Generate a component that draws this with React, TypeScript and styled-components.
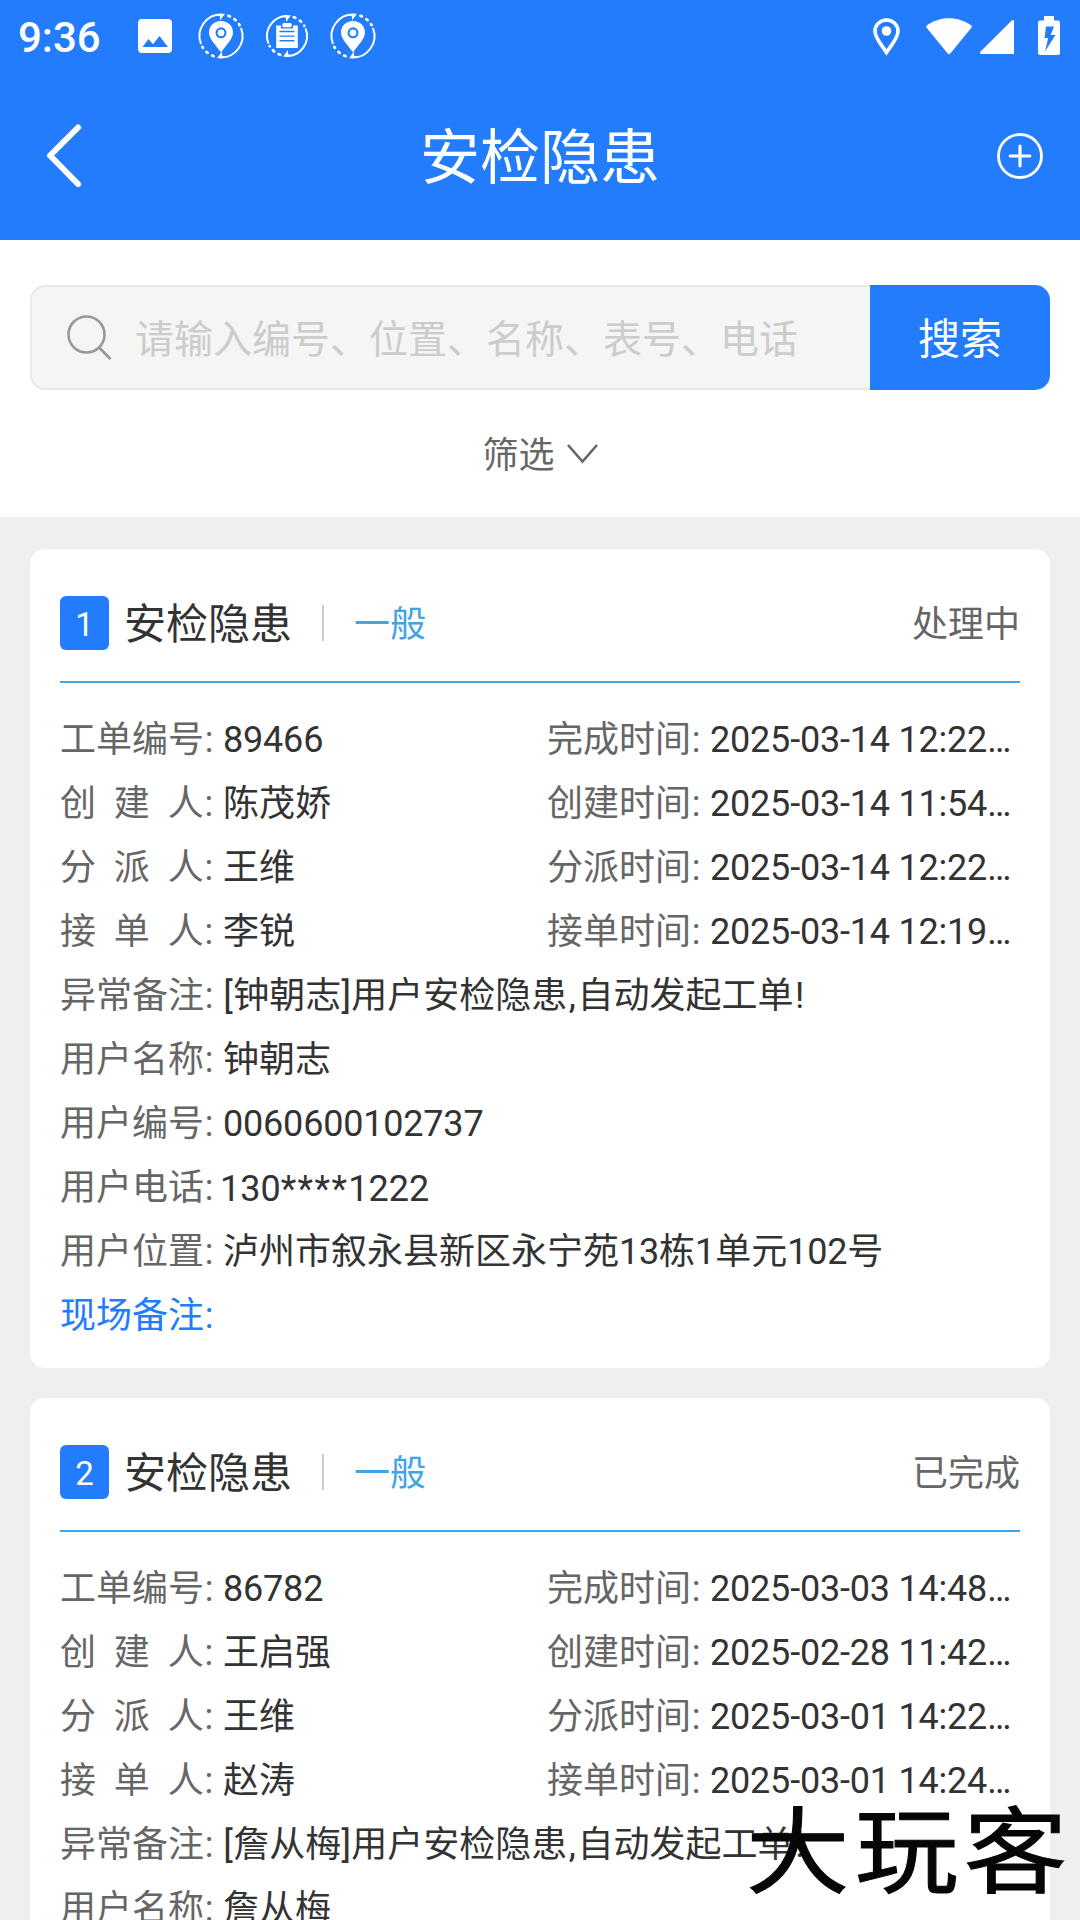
import React from 'react';
import styled, { createGlobalStyle } from 'styled-components';

const BLUE = '#227cfc';
const SKY = '#40a5e7';

const GlobalStyle = createGlobalStyle`
  * { box-sizing: border-box; }
  html, body { margin: 0; padding: 0; }
  body {
    background: #efefef;
    font-family: Roboto, "Noto Sans CJK SC", sans-serif;
    color: #333;
  }
`;

const Screen = styled.main`
  position: relative;
  width: 1080px;
  height: 1920px;
  overflow: hidden;
  display: flex;
  flex-direction: column;
  background: #efefef;
`;

const Header = styled.header`
  flex: none;
  height: 240px;
  background: ${BLUE};
  color: #fff;
`;

const StatusBar = styled.div`
  height: 72px;
  display: flex;
  justify-content: space-between;
  padding: 0 20px 0 18px;
`;

const StatusSide = styled.div`
  display: flex;
  align-items: center;
`;

const Clock = styled.span`
  width: 120px;
  font-size: 42px;
  font-weight: 500;
  line-height: 72px;
  padding-top: 4px;
`;

const Glyph = styled.svg<{ $gap?: number }>`
  display: block;
  flex: none;
  overflow: visible;
  margin-left: ${(p) => p.$gap ?? 0}px;
`;

const NavBar = styled.nav`
  height: 168px;
  display: grid;
  grid-template-columns: 120px 1fr 120px;
  align-items: center;
`;

const NavButton = styled.button<{ $align: 'start' | 'end' }>`
  display: flex;
  justify-content: flex-${(p) => p.$align};
  padding: 0 37px 0 45px;
  border: 0;
  background: none;
  color: inherit;
`;

const Title = styled.h1`
  margin: 0;
  padding-top: 5px;
  text-align: center;
  font-size: 60px;
  font-weight: 400;
  line-height: 84px;
`;

const SearchPanel = styled.section`
  flex: none;
  height: 277px;
  padding: 45px 30px 0;
  background: #fff;
`;

const SearchRow = styled.div`
  display: flex;
  height: 105px;
`;

const SearchField = styled.div`
  flex: 1;
  display: flex;
  align-items: center;
  padding-left: 35px;
  border: 2px solid #e9e9e9;
  border-right: 0;
  border-radius: 15px 0 0 15px;
  background: #f5f5f5;
`;

const Placeholder = styled.span`
  margin-left: 23px;
  padding-top: 5px;
  font-size: 39px;
  line-height: 56px;
  color: #ccc;
  white-space: nowrap;
`;

const SearchButton = styled.button`
  width: 180px;
  padding: 4px 0 0;
  border: 0;
  border-radius: 0 15px 15px 0;
  background: ${BLUE};
  color: #fff;
  font: 400 42px/60px Roboto, "Noto Sans CJK SC", sans-serif;
`;

const Filter = styled.div`
  display: flex;
  justify-content: center;
  align-items: center;
  height: 127px;
  gap: 12px;
  color: #666;
`;

const FilterText = styled.span`
  padding-top: 5px;
  font-size: 36px;
  line-height: 52px;
`;

const List = styled.section`
  display: flex;
  flex-direction: column;
  gap: 30px;
  padding: 32px 30px 0;
`;

const Card = styled.article`
  flex: none;
  height: 819px;
  padding: 14px 30px 0;
  border-radius: 15px;
  background: #fff;
`;

const CardHead = styled.div`
  display: flex;
  align-items: center;
  height: 120px;
  padding-top: 2px;
  border-bottom: 2px solid ${SKY};
`;

const Badge = styled.span`
  width: 49px;
  height: 54px;
  border-radius: 6px;
  background: ${BLUE};
  color: #fff;
  text-align: center;
  font-size: 33px;
  line-height: 58px;
`;

const CardTitle = styled.span`
  margin-left: 15px;
  padding-top: 3px;
  font-size: 42px;
  line-height: 60px;
`;

const Divider = styled.span`
  width: 2px;
  height: 36px;
  margin: 0 30px;
  background: #ccc;
`;

const Level = styled.span`
  padding-top: 3px;
  font-size: 36px;
  line-height: 52px;
  color: ${SKY};
`;

const Status = styled.span`
  margin-left: auto;
  padding-top: 3px;
  font-size: 36px;
  line-height: 52px;
  color: #666;
`;

const Rows = styled.div`
  padding-top: 25px;
`;

const Row = styled.div`
  display: grid;
  grid-template-columns: 487px 1fr;
  height: 64px;
`;

const Field = styled.div<{ $wide?: boolean }>`
  display: flex;
  font-size: 36px;
  line-height: 64px;
  white-space: pre;
  grid-column: ${(p) => (p.$wide ? '1 / -1' : 'auto')};
`;

const Label = styled.span<{ $active?: boolean }>`
  width: 163px;
  color: ${(p) => (p.$active ? BLUE : '#666')};
`;

const Value = styled.span<{ $phone?: boolean }>`
  margin-left: ${(p) => (p.$phone ? -3 : 0)}px;
  padding-top: ${(p) => (p.$phone ? 1 : 0)}px;
`;

const Digits = styled.span`
  letter-spacing: -0.2px;
`;

const Mark = styled.span<{ $pad: number }>`
  margin: 0 ${(p) => p.$pad}px;
`;

const Stars = styled.span`
  letter-spacing: 1.4px;
`;

const Watermark = styled.div`
  position: absolute;
  left: 746px;
  top: 1775px;
  font-family: "Noto Sans CJK SC", sans-serif;
  font-size: 94px;
  font-weight: 400;
  line-height: 140px;
  letter-spacing: 5px;
  white-space: nowrap;
  color: #060606;
  -webkit-text-stroke: 1px #060606;
  stroke-linejoin: round;
  transform: scaleX(1.1);
  transform-origin: left center;
`;

/* Sets digits, punctuation and asterisks at their own spacing. */
const Mixed = ({ text }: { text: string }) => (
  <>
    {text.split(/([0-9][0-9\-: …]*|[[\],!]|:|\*+)/).map((part, i) => {
      if (!part) return null;
      if (/^[0-9]/.test(part)) return text.includes('*') ? part : <Digits key={i}>{part}</Digits>;
      if (/^\*/.test(part)) return <Stars key={i}>{part}</Stars>;
      if (/^[[\]]$/.test(part)) return <Mark key={i} $pad={0.3}>{part}</Mark>;
      if (/^[,!]$/.test(part)) return <Mark key={i} $pad={1.5}>{part}</Mark>;
      if (part === ':') return <Mark key={i} $pad={0.8}>{part}</Mark>;
      return part;
    })}
  </>
);

const Orbit = ({ r }: { r: number }) => (
  <g fill="none" stroke="#fff" strokeWidth="2" strokeLinecap="round">
    <path d={`M1 ${-r}A${r} ${r} 0 0 0 ${-r * 0.94} ${r * 0.34}`} />
    <path d={`M-1 ${r}A${r} ${r} 0 0 0 ${r * 0.94} ${-r * 0.34}`} />
    <path d={`M${r * 0.34} ${-r * 0.94}A${r} ${r} 0 0 1 ${r * 0.87} ${-r * 0.5}`} strokeWidth="2.6" strokeDasharray="1.800 5" />
    <path d={`M${-r * 0.34} ${r * 0.94}A${r} ${r} 0 0 1 ${-r * 0.87} ${r * 0.5}`} strokeWidth="2.6" strokeDasharray="1.800 5" />
    <path fill="#fff" stroke="none" d={`M-6 ${-r}L4 ${-r - 0.8}L-1 ${-r + 6}L-1 ${-r + 2}ZM6 ${r}L-4 ${r + 0.8}L1 ${r - 6}L1 ${r - 2}Z`} />
  </g>
);

const PinNotice = ({ gap }: { gap: number }) => (
  <Glyph $gap={gap} width="46" height="46" viewBox="-23 -23 46 46">
    <Orbit r={21.5} />
    <path fill="#fff" fillRule="evenodd" d="M0-15C-7-15-12-10-12-3.5C-12 3-5 9 0 16.500C5 9 12 3 12-3.5C12-10 7-15 0-15ZM0-8.700A5.500 5.500 0 1 1 0 2.300A5.500 5.500 0 1 1 0-8.700Z" />
    <circle cy="-3.2" r="3.4" fill="#fff" />
  </Glyph>
);

const TaskNotice = ({ gap }: { gap: number }) => (
  <Glyph $gap={gap} width="42" height="42" viewBox="-21 -21 42 42">
    <Orbit r={20} />
    <path fill="#fff" d="M-10.800-10.500H-6V-7.500H6V-10.500H10.800V12H-10.800Z" />
    <rect x="-4.700" y="-13" width="9.400" height="4.200" rx="1.500" fill="#fff" />
    <path stroke={BLUE} strokeWidth="1.400" d="M-7.500-4.500H7.500M-7.500 .1H7.500M-7.500 4.700H7.500" />
  </Glyph>
);

interface Order {
  title: string;
  level: string;
  status: string;
  pairs: [string, string, string, string][];
  lines: [string, string][];
}

const orders: Order[] = [
  {
    title: '安检隐患',
    level: '一般',
    status: '处理中',
    pairs: [
      ['工单编号:', '89466', '完成时间:', '2025-03-14 12:22…'],
      ['创  建  人:', '陈茂娇', '创建时间:', '2025-03-14 11:54…'],
      ['分  派  人:', '王维', '分派时间:', '2025-03-14 12:22…'],
      ['接  单  人:', '李锐', '接单时间:', '2025-03-14 12:19…'],
    ],
    lines: [
      ['异常备注:', '[钟朝志]用户安检隐患,自动发起工单!'],
      ['用户名称:', '钟朝志'],
      ['用户编号:', '0060600102737'],
      ['用户电话:', '130****1222'],
      ['用户位置:', '泸州市叙永县新区永宁苑13栋1单元102号'],
      ['现场备注:', ''],
    ],
  },
  {
    title: '安检隐患',
    level: '一般',
    status: '已完成',
    pairs: [
      ['工单编号:', '86782', '完成时间:', '2025-03-03 14:48…'],
      ['创  建  人:', '王启强', '创建时间:', '2025-02-28 11:42…'],
      ['分  派  人:', '王维', '分派时间:', '2025-03-01 14:22…'],
      ['接  单  人:', '赵涛', '接单时间:', '2025-03-01 14:24…'],
    ],
    lines: [
      ['异常备注:', '[詹从梅]用户安检隐患,自动发起工单!'],
      ['用户名称:', '詹从梅'],
    ],
  },
];

const OrderCard = ({ order, index }: { order: Order; index: number }) => (
  <Card>
    <CardHead>
      <Badge>{index}</Badge>
      <CardTitle>{order.title}</CardTitle>
      <Divider />
      <Level>{order.level}</Level>
      <Status>{order.status}</Status>
    </CardHead>
    <Rows>
      {order.pairs.map(([l1, v1, l2, v2]) => (
        <Row key={l1}>
          <Field>
            <Label><Mixed text={l1} /></Label>
            <Value><Mixed text={v1} /></Value>
          </Field>
          <Field>
            <Label><Mixed text={l2} /></Label>
            <Value><Mixed text={v2} /></Value>
          </Field>
        </Row>
      ))}
      {order.lines.map(([label, value]) => (
        <Row key={label}>
          <Field $wide>
            <Label $active={label === '现场备注:'}><Mixed text={label} /></Label>
            <Value $phone={label === '用户电话:'}><Mixed text={value} /></Value>
          </Field>
        </Row>
      ))}
    </Rows>
  </Card>
);

export default function App() {
  return (
    <Screen>
      <GlobalStyle />
      <Header>
        <StatusBar>
          <StatusSide>
            <Clock>9:36</Clock>
            <Glyph width="34" height="34" viewBox="0 0 34 34">
              <path fill="#fff" fillRule="evenodd" d="M4 0H30A4 4 0 0 1 34 4V30A4 4 0 0 1 30 34H4A4 4 0 0 1 0 30V4A4 4 0 0 1 4 0ZM4.500 28H30L21.500 17L15 25.200L10.500 20Z" />
            </Glyph>
            <PinNotice gap={26} />
            <TaskNotice gap={22} />
            <PinNotice gap={22} />
          </StatusSide>
          <StatusSide>
            <Glyph width="27" height="37" viewBox="0 0 27 37">
              <path fill="none" stroke="#fff" strokeWidth="3.600" d="M13.500 2C7 2 2 7 2 13.200C2 20 8 26 13.500 34.500C19 26 25 20 25 13.200C25 7 20 2 13.500 2Z" />
              <circle cx="13.500" cy="13" r="4.800" fill="#fff" />
            </Glyph>
            <Glyph $gap={26} width="46" height="37" viewBox="0 0 46 37">
              <path fill="#fff" d="M.8 7.500C7 3 14.500.3 23 .3S39 3 45.200 7.500Q46.300 8.500 45.400 9.700L24.300 35.500Q23 37 21.700 35.500L.6 9.700Q-.3 8.500.8 7.500Z" />
            </Glyph>
            <Glyph $gap={8} width="34" height="34" viewBox="0 -1 34 34">
              <path fill="#fff" d="M34 1.500V34H1.500Q-1 34 .6 31.500L31.500.7Q34-.8 34 1.500Z" />
            </Glyph>
            <Glyph $gap={24} width="22" height="39" viewBox="0 1 22 39">
              <path fill="#fff" fillRule="evenodd" d="M6 0H16V4.500H20Q22 4.500 22 6.500V37Q22 39 20 39H2Q0 39 0 37V6.500Q0 4.500 2 4.500H6ZM8 10.500L6.500 22H10.200L7 35.500L17.500 19H12.500L16 10.500Z" />
            </Glyph>
          </StatusSide>
        </StatusBar>
        <NavBar>
          <NavButton $align="start" aria-label="返回">
            <Glyph width="36" height="64" viewBox="0 0 36 64">
              <path d="M33 3.500L5 31.500L33 60" fill="none" stroke="#fff" strokeWidth="6" strokeLinecap="round" strokeLinejoin="round" />
            </Glyph>
          </NavButton>
          <Title>安检隐患</Title>
          <NavButton $align="end" aria-label="新增">
            <Glyph width="46" height="46" viewBox="-23 -23 46 46">
              <circle r="21.500" fill="none" stroke="#fff" strokeWidth="2.800" />
              <path d="M-9.800 0H9.800M0-9.800V9.800" stroke="#fff" strokeWidth="3.200" strokeLinecap="round" />
            </Glyph>
          </NavButton>
        </NavBar>
      </Header>
      <SearchPanel>
        <SearchRow>
          <SearchField>
            <Glyph width="45" height="45" viewBox="0 0 45 45">
              <g fill="none" stroke="#999" strokeWidth="2.600">
                <circle cx="19.500" cy="19.500" r="18" />
                <path d="M32 32.500L43.500 44" strokeWidth="2.800" />
              </g>
            </Glyph>
            <Placeholder>请输入编号、位置、名称、表号、电话</Placeholder>
          </SearchField>
          <SearchButton>搜索</SearchButton>
        </SearchRow>
        <Filter>
          <FilterText>筛选</FilterText>
          <Glyph width="31" height="19" viewBox="0 0 31 19">
            <path d="M1 1L15.500 17.500L30 1" fill="none" stroke="#666" strokeWidth="2.600" />
          </Glyph>
        </Filter>
      </SearchPanel>
      <List>
        {orders.map((order, i) => (
          <OrderCard key={i} order={order} index={i + 1} />
        ))}
      </List>
      <Watermark>大玩客</Watermark>
    </Screen>
  );
}
